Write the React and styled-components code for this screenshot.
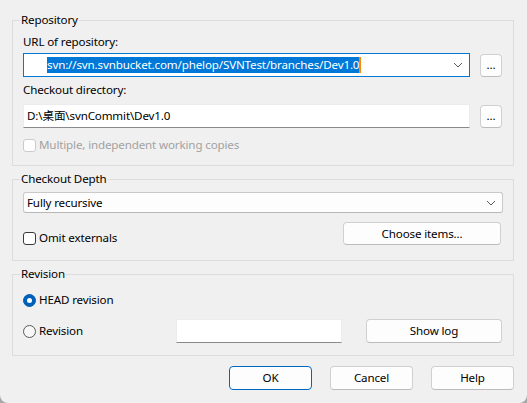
import React from 'react'
import {styled, createGlobalStyle} from 'styled-components'

const Global = createGlobalStyle`
  html, body {
    margin: 0;
    padding: 0;
    background: #a8a8a8;
  }
  * {
    box-sizing: border-box;
  }
`

const Dialog = styled.div`
  width: 527px;
  height: 403px;
  background: #f0f0f0;
  border-radius: 0 0 8px 8px;
  padding: 12px 13px 0 12px;
  font-family: "Noto Sans", "Noto Sans CJK SC", sans-serif;
  font-size: 11.6px;
  letter-spacing: -0.15px;
  color: #000;
  display: flex;
  flex-direction: column;
`

const Group = styled.fieldset`
  margin: ${p => p.$first ? '0' : '5px'} 0 0 0;
  width: 502px;
  border: 1px solid #dcdcdc;
  padding: ${p => p.$pad};
  min-width: 0;
`

const Legend = styled.legend`
  padding: 0 1px;
  margin-left: -3px;
  line-height: 16px;
`

const Label = styled.div`
  line-height: 16px;
  margin-top: ${p => p.$mt || 0}px;
  margin-bottom: ${p => p.$mb || 0}px;
`

const Row = styled.div`
  display: flex;
  align-items: ${p => p.$align || 'center'};
  justify-content: ${p => p.$justify || 'flex-start'};
  gap: ${p => p.$gap || 0}px;
  margin-top: ${p => p.$mt || 0}px;
`

const UrlCombo = styled.div`
  flex: 1;
  height: 24px;
  background: #fff;
  border: 1px solid #0078d4;
  display: flex;
  align-items: center;
  padding-left: 23px;
  padding-right: 6px;
`

const Selected = styled.span`
  background: #0078d7;
  color: #fff;
  line-height: 16px;
  white-space: nowrap;
`

const Caret = styled.span`
  display: inline-block;
  width: 2px;
  height: 16px;
  background: #ff8a00;
`

const Spacer = styled.div`
  flex: 1;
`

const Edit = styled.div`
  flex: ${p => p.$w ? 'none' : 1};
  width: ${p => p.$w ? p.$w + 'px' : 'auto'};
  height: 24px;
  background: #fff;
  border: 1px solid #ececec;
  border-bottom-color: #8a8a8a;
  padding-left: 3px;
  display: flex;
  align-items: center;
  line-height: 16px;
  white-space: nowrap;
`

const Combo = styled.div`
  flex: 1;
  height: 21px;
  margin-right: -2px;
  background: #fdfdfd;
  border: 1px solid #c9c9c9;
  border-bottom-color: #b8b8b8;
  border-radius: 3px;
  display: flex;
  align-items: center;
  padding: 0 6px 0 3px;
`

const Button = styled.button`
  width: ${p => p.$w}px;
  height: ${p => p.$h || 24}px;
  margin: 0;
  padding: 0;
  background: #fdfdfd;
  border: 1px solid ${p => p.$focus ? '#0067c0' : '#d0d0d0'};
  border-bottom-color: ${p => p.$focus ? '#0067c0' : '#bcbcbc'};
  border-radius: 4px;
  font-family: inherit;
  font-size: inherit;
  letter-spacing: inherit;
  color: #000;
  line-height: 16px;
  flex: none;
`

const Check = styled.span`
  width: 13px;
  height: 13px;
  flex: none;
  border-radius: 3px;
  background: #fff;
  border: 1px solid ${p => p.$disabled ? '#cbcbcb' : '#3a3a3a'};
`

const Radio = styled.span`
  width: 13px;
  height: 13px;
  flex: none;
  border-radius: 50%;
  background: ${p => p.$on ? '#005fb8' : '#f7f7f7'};
  border: 1px solid ${p => p.$on ? '#005fb8' : '#5a5a5a'};
  display: flex;
  align-items: center;
  justify-content: center;
  &::after {
    content: '';
    display: ${p => p.$on ? 'block' : 'none'};
    width: 5px;
    height: 5px;
    border-radius: 50%;
    background: #fff;
  }
`

const Option = styled.div`
  display: flex;
  align-items: center;
  gap: 3px;
  height: 16px;
  line-height: 16px;
  color: ${p => p.$disabled ? '#a2a2a2' : '#000'};
  width: ${p => p.$w ? p.$w + 'px' : 'auto'};
  margin-top: ${p => p.$mt || 0}px;
  flex: none;
`

const Footer = styled.div`
  display: flex;
  justify-content: flex-end;
  gap: 18px;
  margin-top: 10px;
  width: 502px;
`

function Chevron() {
  return (
    <svg width="10" height="6" viewBox="0 0 10 6">
      <polyline points="1,1 5,5 9,1" fill="none" stroke="#5c5c5c" strokeWidth="1"/>
    </svg>
  )
}

export default function App() {
  return (
    <Dialog>
      <Global/>
      <Group $first $pad="6px 11px 12px 10px">
        <Legend>Repository</Legend>
        <Label $mb={3}>URL of repository:</Label>
        <Row $gap={10}>
          <UrlCombo>
            <Selected>svn://svn.svnbucket.com/phelop/SVNTest/branches/Dev1.0</Selected>
            <Caret/>
            <Spacer/>
            <Chevron/>
          </UrlCombo>
          <Button $w={22} $h={23}>...</Button>
        </Row>
        <Label $mt={5} $mb={6}>Checkout directory:</Label>
        <Row $gap={10}>
          <Edit>D:\桌面\svnCommit\Dev1.0</Edit>
          <Button $w={22} $h={23}>...</Button>
        </Row>
        <Option $disabled $mt={9}>
          <Check $disabled/>
          Multiple, independent working copies
        </Option>
      </Group>

      <Group $pad="5px 12px 14px 10px">
        <Legend>Checkout Depth</Legend>
        <Row>
          <Combo>
            Fully recursive
            <Spacer/>
            <Chevron/>
          </Combo>
        </Row>
        <Row $mt={9} $align="flex-start" $justify="space-between">
          <Option $mt={8}>
            <Check/>
            Omit externals
          </Option>
          <Button $w={158} $h={23}>Choose items...</Button>
        </Row>
      </Group>

      <Group $pad="10px 11px 12px 10px">
        <Legend>Revision</Legend>
        <Option>
          <Radio $on/>
          HEAD revision
        </Option>
        <Row $mt={11}>
          <Option $w={153}>
            <Radio/>
            Revision
          </Option>
          <Edit $w={166}/>
          <Spacer/>
          <Button $w={136}>Show log</Button>
        </Row>
      </Group>

      <Footer>
        <Button $w={83} $focus>OK</Button>
        <Button $w={83}>Cancel</Button>
        <Button $w={83}>Help</Button>
      </Footer>
    </Dialog>
  )
}
